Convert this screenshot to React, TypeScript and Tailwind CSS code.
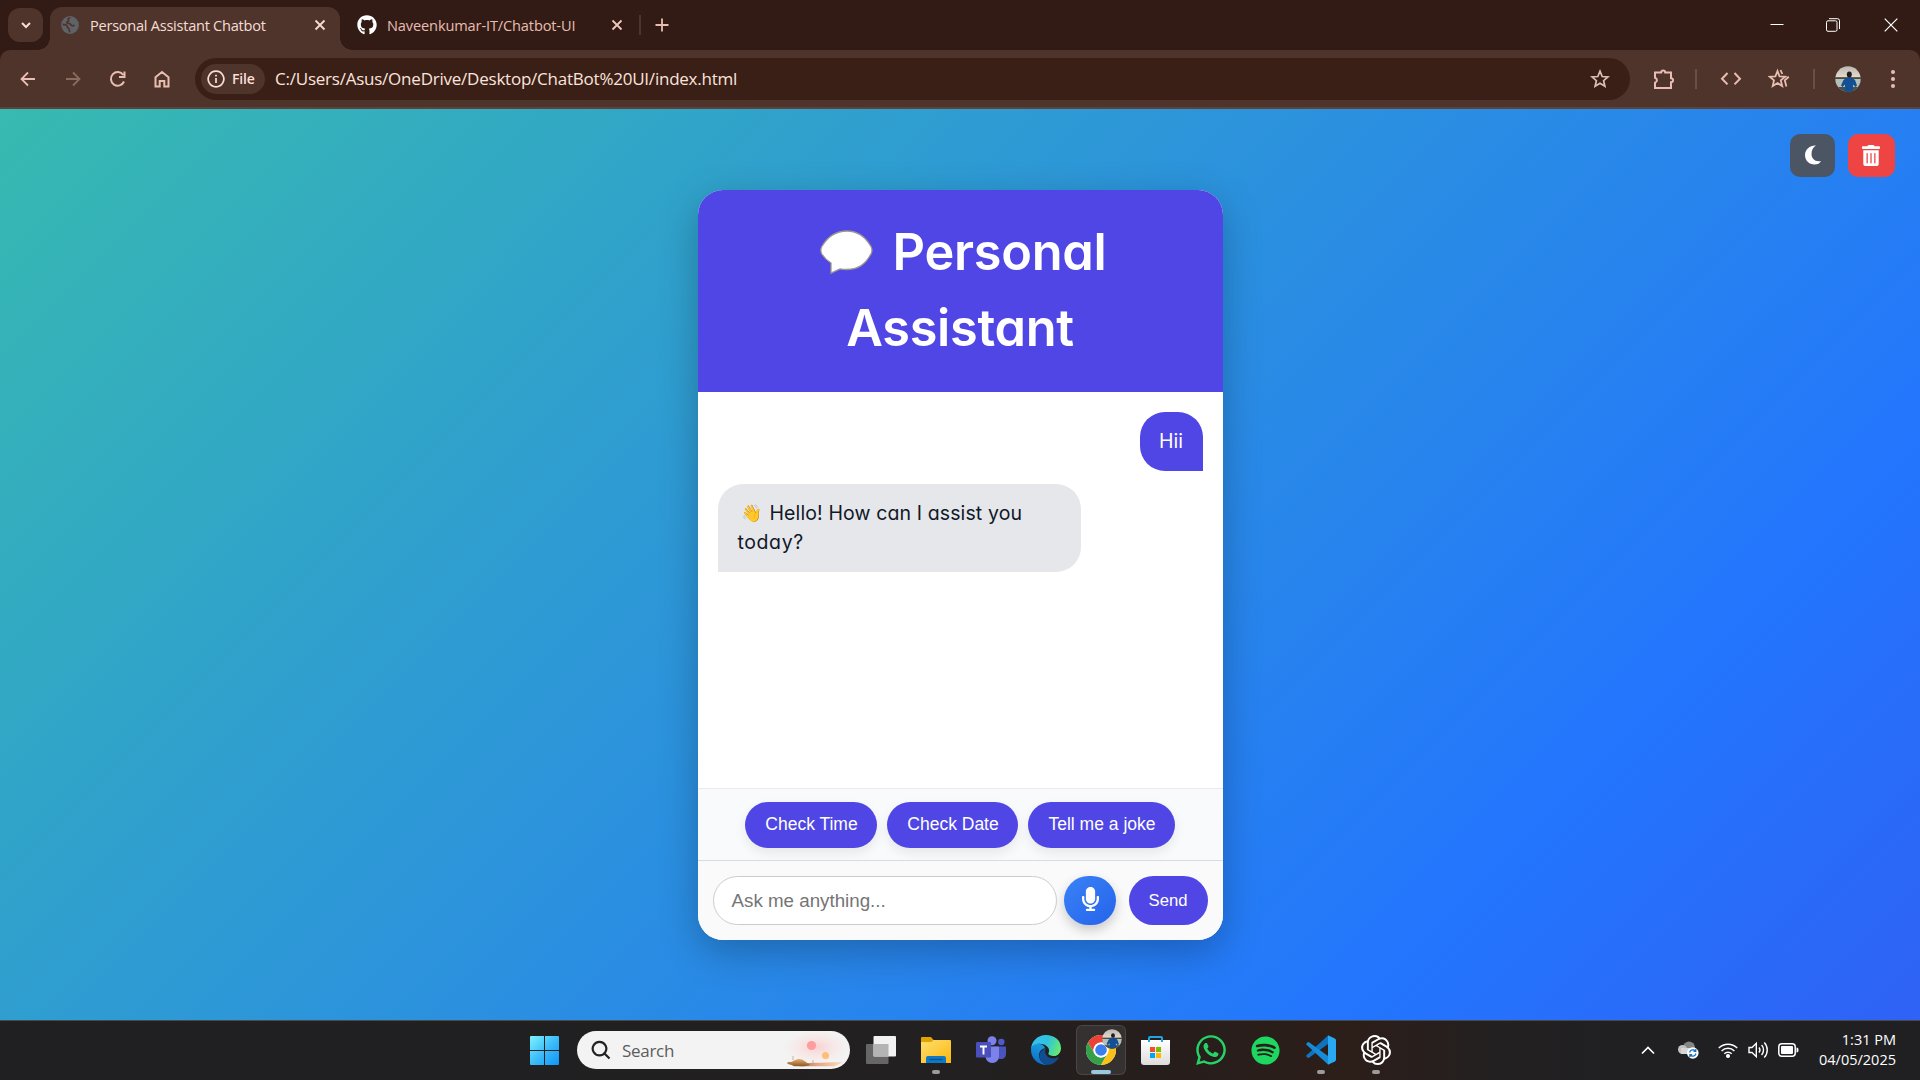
import type { ReactNode } from 'react';
import { FaGithub, FaTrashAlt, FaMicrophone, FaWhatsapp, FaSpotify } from 'react-icons/fa';
import { SiOpenai } from 'react-icons/si';

const segoe = "font-['Open_Sans','Noto_Sans',sans-serif]";
const geo = "font-['Inter',sans-serif] [font-feature-settings:'cv11']";
const arial = "font-['Liberation_Sans',Arial,sans-serif]";

function Stroke({ size, d, width = 1.8, className = '' }: { size: number; d: string; width?: number; className?: string }) {
  return (
    <svg width={size} height={size} viewBox={`0 0 ${size} ${size}`} fill="none" stroke="currentColor" strokeWidth={width} className={`shrink-0 ${className}`}>
      <path d={d} />
    </svg>
  );
}

function Avatar({ size, id }: { size: number; id: string }) {
  return (
    <svg width={size} height={size} viewBox="0 0 26 26" className="shrink-0">
      <defs>
        <clipPath id={id}><circle cx="13" cy="13" r="12.7" /></clipPath>
        <linearGradient id={`${id}s`} x1="0" y1="0" x2="0" y2="1">
          <stop offset="0" stopColor="#b9b6b3" /><stop offset="1" stopColor="#e9dccb" />
        </linearGradient>
      </defs>
      <g clipPath={`url(#${id})`}>
        <rect width="26" height="12" fill={`url(#${id}s)`} />
        <rect y="11.300" width="26" height="1.500" fill="#26302b" />
        <rect y="12.800" width="26" height="13" fill="#b5bfb9" />
        <rect y="21" width="26" height="5" fill="#46504c" />
        <path d="M12 11.500h4.500l3.500 2.500 2 5.500-1.500 1.500-2.500-2.500V26h-8v-7.500L7.500 21 6 19.500 8.500 14z" fill="#124f94" />
        <ellipse cx="14.300" cy="8.500" rx="2.500" ry="3" fill="#231c1c" />
      </g>
    </svg>
  );
}

function Globe() {
  return (
    <svg width="18" height="18" viewBox="0 0 18 18" className="shrink-0">
      <circle cx="9" cy="9" r="8.900" fill="#5f6368" />
      <path d="M9.300 1.800C6.500 2 6.800 3.500 7.500 4.200c.4.600-.3 1.300-1.200 1.500-.8.300-.6 1.600.5 1.700 1.800.1 2.700.1 3.200 1.500.4 1.200 2.200 1 3.700.4M1.500 8.300c2 0 4.700.9 4.900 2.600.1 1.300 1.600 1 1.700 2.300.1 1 .1 1.900 1 2.900" fill="none" stroke="#4f342b" strokeWidth="1.700" />
    </svg>
  );
}

function TabStrip() {
  return (
    <div className="flex h-[50px] items-stretch bg-[#321b15]">
      <div className="mt-2 ml-2 flex h-[34px] w-[35px] items-center justify-center rounded-xl bg-[#4f342b] text-[#f7dcd4]">
        <Stroke size={12} width={2} d="M2 4l4 4 4-4" />
      </div>
      <div className="relative mt-[7px] ml-[7px] flex h-[43px] w-[290px] items-center rounded-t-xl bg-[#4f342b] pb-[8px] pl-[11px]">
        <span className="absolute bottom-0 -left-3 h-3 w-3 bg-[radial-gradient(circle_at_0_0,transparent_11.500px,#4f342b_12px)]" />
        <span className="absolute -right-3 bottom-0 h-3 w-3 bg-[radial-gradient(circle_at_100%_0,transparent_11.500px,#4f342b_12px)]" />
        <Globe />
        <span className={`ml-[11px] w-[224px] text-[14.6px] leading-5 tracking-[-0.27px] whitespace-nowrap text-[#f5dcd5] ${segoe}`}>Personal Assistant Chatbot</span>
        <Stroke size={12} width={1.800} className="text-[#f7dcd4]" d="M1.500 1.500l9 9M10.500 1.500l-9 9" />
      </div>
      <div className="flex items-center pl-[17px]">
        <FaGithub className="h-5 w-5 text-white" />
        <span className={`ml-[10px] w-[224px] text-[14.6px] leading-5 tracking-[-0.14px] whitespace-nowrap text-[#e7bdb2] ${segoe}`}>Naveenkumar-IT/Chatbot-UI</span>
        <Stroke size={12} width={1.800} className="text-[#f0c9be]" d="M1.500 1.500l9 9M10.500 1.500l-9 9" />
        <span className="ml-[16px] h-5 w-[2px] bg-[#4f342b]" />
        <Stroke size={14} width={1.800} className="ml-[14px] text-[#e7bdb2]" d="M7 .5v13M.5 7h13" />
      </div>
      <div className="ml-auto flex h-[49px] items-center text-white">
        <Stroke size={14} width={1} className="mr-[42px]" d="M.5 6.500h13" />
        <svg width="14" height="14" viewBox="0 0 14 14" fill="none" stroke="white" className="mr-[44px]">
          <rect x=".5" y="2.800" width="10.500" height="10.500" rx="1.500" />
          <path d="M3 .7h8.500a2 2 0 0 1 2 2V11" />
        </svg>
        <Stroke size={14} width={1.200} className="mr-[22px]" d="M.7.700l12.600 12.600M13.300.7L.7 13.300" />
      </div>
    </div>
  );
}

function Toolbar() {
  return (
    <div className="bg-[#321b15]">
      <div className="flex h-[59px] items-center rounded-t-[10px] border-b-2 border-[#5c443c] bg-[#4f342b] text-[#e9bdb1]">
        <Stroke size={16} className="ml-[20px]" d="M15 8H2M8 1.500L1.500 8 8 14.500" />
        <Stroke size={16} className="ml-[29px] text-[#8b6a60]" d="M1 8h13M8 1.500L14.500 8 8 14.500" />
        <Stroke size={18} width={2} className="ml-[28px]" d="M15 11.500A6.800 6.800 0 1 1 14.300 5M15.500 1.500v5.500H10" />
        <Stroke size={18} width={2} className="ml-[26px]" d="M2.500 7.200V16.500h4.200v-5.500h4.600v5.500h4.200V7.200L9 2z" />
        <div className="ml-[24px] flex h-[42px] w-[1435px] items-center rounded-full bg-[#3a1f17] pr-[20px] pl-[6px]">
          <div className="flex h-[30px] w-[64px] items-center rounded-full bg-[#4f342b] pl-[6px] text-[#f9dfd7]">
            <Stroke size={18} width={1.700} d="M9 1.200a7.800 7.800 0 1 0 .01 0M9 8v5M9 4.700v1.900" />
            <span className={`ml-[7px] text-[14px] leading-5 font-semibold tracking-[-0.2px] ${segoe}`}>File</span>
          </div>
          <span className={`mt-[1px] ml-[10px] text-[17px] leading-6 tracking-[-0.23px] whitespace-nowrap text-[#fbe4dd] ${segoe}`}>C:/Users/Asus/OneDrive/Desktop/ChatBot%20UI/index.html</span>
          <Stroke size={20} width={1.700} className="ml-auto text-[#d9c0b9]" d="M10 2.200l2.200 5.300 5.700.5-4.300 3.700 1.300 5.600L10 14.300l-4.900 3 1.300-5.600L2.100 8l5.700-.5z" />
        </div>
        <Stroke size={22} width={2} className="ml-[23px]" d="M2 4.500h6.200a2 2 0 0 1 4 0H18v5.700a2 2 0 0 1 0 4V20H2v-5.200a2.600 2.600 0 0 0 0-5z" />
        <span className="ml-[20px] h-5 w-[2px] bg-[#6f4d43]" />
        <Stroke size={22} width={2} className="ml-[23px]" d="M7.500 5L2 10.700l5.500 5.700M14.500 5l5.500 5.700-5.500 5.700" />
        <svg width="22" height="22" viewBox="0 0 22 22" fill="none" stroke="currentColor" strokeWidth="1.800" className="ml-[26px]">
          <path d="M9.500 3l2 5.300 5.700.4-4.400 3.700 1.400 5.600-4.700-3-4.800 3L6 12.400 1.700 8.700l5.700-.4zM12.500 2l1.800 4M20.800 8.800l-4 3.500 1.600 6.200" />
        </svg>
        <span className="ml-[23px] h-5 w-[2px] bg-[#6f4d43]" />
        <span className="ml-[20px]"><Avatar size={26} id="profile" /></span>
        <div className="ml-[30px] flex flex-col gap-[3px]">
          <i className="h-1 w-1 rounded-full bg-current" /><i className="h-1 w-1 rounded-full bg-current" /><i className="h-1 w-1 rounded-full bg-current" />
        </div>
      </div>
    </div>
  );
}

function ChatCard() {
  const quick = [
    { label: 'Check Time', w: 'w-[132px]' },
    { label: 'Check Date', w: 'w-[131px]' },
    { label: 'Tell me a joke', w: 'w-[147px]' },
  ];
  return (
    <div className="mt-[81px] flex h-[750px] w-[525px] flex-col overflow-hidden rounded-[25px] bg-white shadow-[0_12px_38px_rgba(0,0,0,0.25)]">
      <h1 className={`flex h-[202px] flex-col items-center bg-[#4f46e5] pt-[24px] text-[50.5px] leading-[76px] font-semibold tracking-[-0.3px] text-white ${geo}`}>
        <span className="flex items-center pl-[6px]">
          <svg width="53" height="44" viewBox="0 0 53 44" className="mr-[20px]">
            <path d="M27 1C38 1 45 6 51 16.500c1.300 2.500 1.300 5 0 7.500C45 35 38 39.500 26 39.500c-2 0-4-.2-6-.6l-9 4.300V33C7 30.500 4 27.500 1.800 24c-1.300-2.500-1.300-5 0-7.500C8 6 16 1 27 1z" fill="white" stroke="#9b9590" strokeWidth="1.300" />
          </svg>
          Personal
        </span>
        <span>Assistant</span>
      </h1>
      <div className={`flex h-[396px] flex-col gap-[13px] p-5 text-[19.5px] leading-[29px] ${geo}`}>
        <div className="flex h-[59px] w-[63px] items-center justify-center self-end rounded-[25px] rounded-br-none bg-[#4f46e5] text-white">Hii</div>
        <div className="h-[88px] w-[363px] rounded-[25px] rounded-bl-none bg-[#e5e7eb] px-5 py-[15px] text-[#111827]">
          <div className="flex items-center whitespace-nowrap">
            <span className="mr-[6px] w-[26px] pl-[3px] text-[17px]">👋</span>
            <span className="tracking-[0.12px]">Hello! How can I assist you</span>
          </div>
          <div className="tracking-[0.6px]">today?</div>
        </div>
      </div>
      <div className={`flex h-[72px] justify-center gap-[10px] border-t border-[#e8eaed] bg-[#f8fafc] pt-[13px] ${arial}`}>
        {quick.map((q) => (
          <button key={q.label} className={`h-[46px] rounded-[25px] bg-[#4f46e5] pb-[1px] pl-[1px] text-[17.5px] whitespace-nowrap text-white shadow-[0_5px_12px_rgba(0,0,0,0.08)] ${q.w}`}>{q.label}</button>
        ))}
      </div>
      <div className={`flex h-20 items-start border-t border-[#d9dbde] bg-[#fafafa] pt-[15px] pl-[15px] ${arial}`}>
        <div className="flex h-[49px] w-[344px] items-center rounded-full border border-[#ccc] bg-white pt-[1px] pl-[18px] text-[18.75px] text-[#757575]">Ask me anything...</div>
        <button className="ml-[7px] flex h-[49px] w-[52px] items-center justify-center rounded-full bg-linear-to-br from-[#3b82f6] to-[#2563eb] pb-[3px] pl-[1px] text-white shadow-[0_5px_12px_rgba(0,0,0,0.2)]">
          <FaMicrophone className="h-6 w-[17px]" preserveAspectRatio="none" />
        </button>
        <button className="ml-[13px] h-[49px] w-[79px] rounded-[25px] bg-[#4f46e5] text-[16.67px] text-white">Send</button>
      </div>
    </div>
  );
}

function Page() {
  return (
    <div className="relative flex h-[911px] items-start justify-center bg-[linear-gradient(135deg,#37bab0_0%,#2375fe_80%,#2f62f5_100%)]">
      <ChatCard />
      <div className="absolute top-[25px] right-[25px] flex gap-[13px]">
        <button className="flex h-[43px] w-[45px] items-center justify-center rounded-[10px] bg-[#4b5563]">
          <svg width="18" height="20" viewBox="0 0 18 20" className="mb-[2px]"><path d="M12 .5C6.500 0 1 4 1 10c0 5.500 4 9.500 9.500 9.500 3 0 5.500-1.300 6.500-3.600-6 1.200-9.500-2.400-9.500-7C7.500 5 9 2.300 12 .5z" fill="white" /></svg>
        </button>
        <button className="flex h-[43px] w-[47px] items-center justify-center rounded-[10px] bg-[#ef4444] pr-[2px]">
          <FaTrashAlt className="h-[21px] w-[18px] text-white" preserveAspectRatio="none" />
        </button>
      </div>
    </div>
  );
}

function TaskItem({ children, dot, active }: { children: ReactNode; dot?: boolean; active?: boolean }) {
  return (
    <div className={`relative flex h-[50px] w-[50px] items-center justify-center rounded-md ${active ? 'border border-white/10 bg-[#353130]' : ''}`}>
      {children}
      {dot && <span className="absolute bottom-[1px] h-1 w-2 rounded-full bg-[#9c9b9b]" />}
      {active && <span className="absolute bottom-0 h-1 w-5 rounded-full bg-[#9ac8dd]" />}
    </div>
  );
}

function Teams() {
  return (
    <svg width="30" height="28" viewBox="0 0 30 28">
      <circle cx="25.300" cy="6" r="3.200" fill="#5059c9" />
      <path d="M18 10.500h11c.6 0 1 .4 1 1V18c0 3-2 5-5 5s-6-2-6-5z" fill="#4b53bc" />
      <circle cx="16" cy="4.800" r="4.500" fill="#7b83eb" />
      <path d="M10 10.500h12c.6 0 1 .4 1 1V20c0 4-2.800 7-6.700 7S9.500 24 9.500 20z" fill="#7b83eb" />
      <rect y="6" width="15" height="15.500" rx="1.300" fill="#4a50bb" />
      <path d="M4 10.500h7M7.500 10.500v8" stroke="white" strokeWidth="1.900" />
    </svg>
  );
}

function Edge() {
  return (
    <svg width="30" height="30" viewBox="0 0 256 256">
      <defs>
        <linearGradient id="e1" x1="0" y1="0" x2="1" y2="0"><stop stopColor="#0f4f94" /><stop offset="1" stopColor="#114a8b" /></linearGradient>
        <linearGradient id="e2" x1=".6" y1="0" x2=".3" y2="1"><stop stopColor="#1b9de2" /><stop offset="1" stopColor="#0a6cc4" /></linearGradient>
        <linearGradient id="e3" x1="0" y1=".3" x2="1" y2=".6"><stop stopColor="#35c1f1" /><stop offset=".5" stopColor="#2fc2df" /><stop offset="1" stopColor="#66eb6e" /></linearGradient>
      </defs>
      <path d="M231 190c-12 7-26 10-41 10-40 0-70-27-70-62 0-10 5-18 13-23C100 117 72 148 72 180c0 40 38 72 78 74 35-3 65-25 84-56 3-5 1-10-3-8z" fill="url(#e1)" />
      <path d="M106 241c-24-15-38-40-38-68 0-32 25-60 52-61-8-31-46-38-66-38C26 74 0 96 0 128c0 70 52 128 140 128 4 0 7 0 10-1-16 0-31-5-44-14z" fill="url(#e2)" />
      <path d="M152 149c-1 1-4 3-4 8 0 12 20 22 45 22 37 0 63-33 63-67C256 42 196 0 128 0 52 0 1 58 0 126c2-35 37-52 70-52 46 0 84 25 84 57 0 8 0 14-2 18z" fill="url(#e3)" />
    </svg>
  );
}

function Chrome() {
  return (
    <svg width="30" height="30" viewBox="0 0 48 48">
      <circle cx="24" cy="24" r="24" fill="#fff" />
      <path d="M3.200 12A24 24 0 0 1 44.800 12H24a12 12 0 0 0-10.400 18z" fill="#ea4335" />
      <path d="M3.200 12A24 24 0 0 0 24 48l10.400-18a12 12 0 0 1-20.800 0z" fill="#34a047" />
      <path d="M44.800 12A24 24 0 0 1 24 48l10.400-18A12 12 0 0 0 34.400 18 12 12 0 0 0 24 12z" fill="#fbc116" />
      <circle cx="24" cy="24" r="12" fill="#fff" />
      <circle cx="24" cy="24" r="9.300" fill="#3c7eed" />
    </svg>
  );
}

function Taskbar() {
  return (
    <div className="relative flex h-[60px] items-center border-t border-[#4a4a4a] bg-[linear-gradient(90deg,#202022_0%,#222021_50%,#261e1c_60%,#2c1e19_70%,#232021_78%,#202022_85%)] pb-[1px]">
      <svg width="29" height="29" viewBox="0 0 29 29" className="ml-[530px]">
        <defs><linearGradient id="win" x1="0" y1="0" x2="1" y2="1"><stop stopColor="#7df3fe" /><stop offset=".5" stopColor="#3dbdf9" /><stop offset="1" stopColor="#0f94f8" /></linearGradient></defs>
        <path d="M0 1q0-1 1-1h13v14H0zM15 0h13q1 0 1 1v13H15zM0 15h14v14H1q-1 0-1-1zM15 15h14v13q0 1-1 1H15z" fill="url(#win)" />
      </svg>
      <div className="ml-[18px] flex h-[38px] w-[273px] items-center overflow-hidden rounded-full bg-[#f3f3f3] pl-[14px]">
        <Stroke size={20} width={2.200} className="text-[#222]" d="M8.500 1.800a6.800 6.800 0 1 0 .01 0M13.500 13.500l5 5" />
        <span className={`mt-[1px] ml-[11px] text-[17px] leading-6 tracking-[-0.3px] text-[#5c5c5c] ${segoe}`}>Search</span>
        <svg width="74" height="38" viewBox="0 0 74 38" className="ml-auto">
          <defs>
            <radialGradient id="glow"><stop stopColor="#ffb9b9" stopOpacity=".6" /><stop offset="1" stopColor="#ffd8d0" stopOpacity="0" /></radialGradient>
            <linearGradient id="shell" x1="0" y1="0" x2="0" y2="1"><stop stopColor="#e9b26d" /><stop offset="1" stopColor="#8c5427" /></linearGradient>
            <linearGradient id="sand" x1="0" y1="0" x2="1" y2="0"><stop stopColor="#9a5c36" /><stop offset=".5" stopColor="#e3a581" /><stop offset="1" stopColor="#fbdcba" /></linearGradient>
          </defs>
          <ellipse cx="40" cy="16" rx="33" ry="17" fill="url(#glow)" />
          <circle cx="35.500" cy="14.500" r="4.600" fill="#ff9c9e" />
          <circle cx="49.500" cy="24.500" r="3.500" fill="#fdbf76" />
          <path d="M15 33.500c10-1.500 30-2 52-2.200l-9 4H18z" fill="url(#sand)" />
          <path d="M17 29v-4M37 32v-3" stroke="#c9b19e" />
          <path d="M11 31.500c3-1 5 0 7-2 4-2.500 8-2 11 .8 2 2 4 2.200 5 3.700-6 1.800-14 1.500-19-.2-2-.5-4-.9-4-2.300z" fill="url(#shell)" />
        </svg>
      </div>
      <div className="ml-[6px] flex gap-[5px]">
        <TaskItem>
          <svg width="30" height="28" viewBox="0 0 30 28"><rect y="8" width="22.500" height="20" rx="1" fill="#666" /><rect x="7.500" width="22.500" height="20.500" rx="1" fill="#f2f2f2" /><path d="M7.500 8h15v12.500h-15z" fill="#b4b4b4" /></svg>
        </TaskItem>
        <TaskItem dot>
          <svg width="30" height="28" viewBox="0 0 30 28">
            <defs><linearGradient id="fold" x1="0" y1="0" x2="1" y2="1"><stop stopColor="#ffdf70" /><stop offset="1" stopColor="#fbb80e" /></linearGradient></defs>
            <path d="M0 2q0-1 1-1h9l3 3.500V8H0z" fill="#e2a300" /><path d="M0 6h10.500l2-2H29q1 0 1 1v22H0z" fill="url(#fold)" />
            <path d="M5 27v-5q0-2 2-2h16q2 0 2 2v5z" fill="#0f79c8" /><path d="M8.500 23.500h13" stroke="#0a4f8c" strokeWidth="1.300" />
          </svg>
        </TaskItem>
        <TaskItem><Teams /></TaskItem>
        <TaskItem><Edge /></TaskItem>
        <TaskItem active><Chrome /><span className="absolute top-[3px] right-[3px] flex"><Avatar size={20} id="badge" /></span></TaskItem>
        <TaskItem>
          <svg width="29" height="29" viewBox="0 0 29 29" className="mr-[2px]">
            <defs><linearGradient id="bag" x1="0" y1="0" x2="0" y2="1"><stop stopColor="#fff" /><stop offset="1" stopColor="#dcdcdc" /></linearGradient></defs>
            <path d="M0 4h29v22q0 3-3 3H3q-3 0-3-3z" fill="url(#bag)" />
            <path d="M8 6V2q0-1 1-1h11q1 0 1 1v4" fill="none" stroke="#1fa5e3" strokeWidth="2" />
            <path d="M9 11h5v5H9z" fill="#f25022" /><path d="M15 11h5v5h-5z" fill="#7fba00" /><path d="M9 17h5v5H9z" fill="#00a4ef" /><path d="M15 17h5v5h-5z" fill="#ffb900" />
          </svg>
        </TaskItem>
        <TaskItem><FaWhatsapp className="h-[34px] w-[34px] text-[#25d366]" /></TaskItem>
        <TaskItem><FaSpotify className="mr-[1px] h-[29px] w-[29px] text-[#1ed760]" /></TaskItem>
        <TaskItem dot>
          <svg width="30" height="30" viewBox="0 0 30 30">
            <path d="M22 .5V9L3 22.800q-.7.500-1.300 0L.5 21.500q-.6-.7 0-1.300z" fill="#0f74c0" />
            <path d="M22 29.500V21L3 7.200q-.7-.5-1.300 0L.5 8.500q-.6.700 0 1.300z" fill="#178bd8" />
            <path d="M22 .3l6.800 3.200q1.200.6 1.200 1.800v19.400q0 1.200-1.200 1.800L22 29.700z" fill="#29a9f2" />
          </svg>
        </TaskItem>
        <TaskItem dot><SiOpenai className="h-[30px] w-[30px] text-white" /></TaskItem>
      </div>
      <div className="ml-auto flex items-center pr-[24px] text-white">
        <Stroke size={14} width={1.700} className="mr-[23px]" d="M1 10.500l6-6 6 6" />
        <svg width="21" height="18" viewBox="0 0 21 18" className="mr-[19px]">
          <circle cx="11" cy="6.500" r="6" fill="#858585" /><circle cx="4.500" cy="8.500" r="4.500" fill="#c2c2c2" /><path d="M3 13h9V7H3z" fill="#d6d6d6" />
          <circle cx="14.800" cy="12" r="5.800" fill="#fff" /><path d="M11.500 11.500a3.500 3.500 0 0 1 6-1.500M18 12.500a3.500 3.500 0 0 1-6 1.500M17.800 8v2.300h-2.300M11.800 16v-2.300h2.300" fill="none" stroke="#1673c8" strokeWidth="1.200" />
        </svg>
        <svg width="20" height="17" viewBox="0 0 20 17" fill="none" stroke="white" strokeWidth="1.500" className="mr-[10px]">
          <path d="M.8 6a13 13 0 0 1 18.400 0M3.600 9a9 9 0 0 1 12.800 0M6.300 11.800a5.200 5.200 0 0 1 7.400 0" /><circle cx="10" cy="14" r="1.300" fill="white" />
        </svg>
        <svg width="21" height="18" viewBox="0 0 21 18" fill="none" stroke="white" strokeWidth="1.400" className="mr-[9px]">
          <path d="M1 6.500h3L8.300 2.300v13.400L4 11.500H1zM11 6.500a4 4 0 0 1 0 5M13.600 4a7.500 7.500 0 0 1 0 10M16.300 1.500a11 11 0 0 1 0 15" />
        </svg>
        <svg width="21" height="14" viewBox="0 0 21 14" className="mr-[20px]">
          <rect x=".8" y=".8" width="16.400" height="12.400" rx="3" fill="none" stroke="white" strokeWidth="1.500" /><rect x="3" y="3" width="12" height="8" rx="1" fill="white" /><path d="M18.500 4.500c1.300 0 2 .8 2 2.500s-.7 2.500-2 2.500z" fill="white" />
        </svg>
        <div className={`text-right text-[14.5px] leading-[20px] whitespace-nowrap ${segoe}`}>
          <div>1:31 PM</div>
          <div>04/05/2025</div>
        </div>
      </div>
    </div>
  );
}

export default function App() {
  return (
    <div className="h-[1080px] w-[1920px] overflow-hidden">
      <TabStrip />
      <Toolbar />
      <Page />
      <Taskbar />
    </div>
  );
}
